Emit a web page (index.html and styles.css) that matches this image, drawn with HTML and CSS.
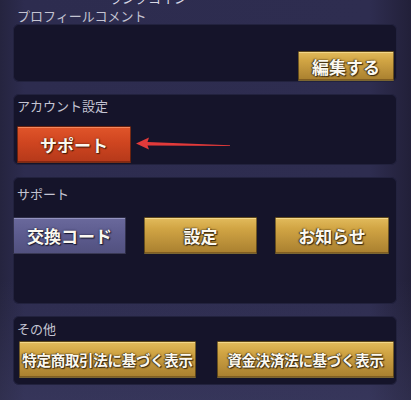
FILE: index.html
```html
<!DOCTYPE html>
<html lang="ja">
<head>
<meta charset="utf-8">
<link rel="stylesheet" href="styles.css">
</head>
<body>
<div class="page">
  <div class="clip-top"><span class="clip-text">ランクコイン</span></div>
  <div class="label outer">プロフィールコメント</div>
  <div class="panel panel-comment">
    <button class="btn gold btn-edit">編集する</button>
  </div>

  <div class="panel panel-account">
    <div class="label">アカウント設定</div>
    <div class="row row-account">
      <button class="btn red btn-support">サポート</button>
    </div>
    <svg class="arrow" width="100" height="16" viewBox="0 0 100 16">
      <path d="M2 7.5 L15 1.5 L13.5 6 L96 9.2 L96 10 L13.5 9.6 L15 13.5 Z" fill="#e23a3a"/>
    </svg>
  </div>

  <div class="panel panel-support">
    <div class="label">サポート</div>
    <div class="row row-three">
      <button class="btn purple btn-third">交換コード</button>
      <button class="btn gold btn-third">設定</button>
      <button class="btn gold btn-third">お知らせ</button>
    </div>
  </div>

  <div class="panel panel-other">
    <div class="label">その他</div>
    <div class="row row-two">
      <button class="btn gold btn-half">特定商取引法に基づく表示</button>
      <button class="btn gold btn-half">資金決済法に基づく表示</button>
    </div>
  </div>
</div>
</body>
</html>
```

FILE: styles.css
```css
html, body {
  margin: 0;
  padding: 0;
}
body {
  width: 411px;
  height: 400px;
  overflow: hidden;
  background: linear-gradient(90deg, #25243f 0%, #2d2c4f 6%, #2e2d50 90%, #222039 100%);
  font-family: "Noto Sans CJK JP", "Noto Sans", sans-serif;
}
.page {
  width: 411px;
  height: 400px;
  box-sizing: border-box;
  padding: 0 14px 0 13px;
  background: linear-gradient(180deg, rgba(40,40,70,0) 0%, rgba(40,40,70,0) 70%, rgba(70,70,110,0.35) 100%);
}
.clip-top {
  height: 5px;
  overflow: hidden;
  padding-left: 96px;
}
.clip-text {
  display: block;
  margin-top: -10px;
  font-size: 13px;
  line-height: 15px;
  color: #d8d8e4;
}
.label {
  font-size: 13px;
  line-height: 15px;
  color: #c4c4d2;
  padding-left: 4px;
}
.label.outer {
  margin-top: 3px;
}
.panel {
  position: relative;
  box-sizing: border-box;
  background: #15142a;
  border-radius: 6px;
  box-shadow: inset 0 0 0 1px rgba(60,60,100,0.35);
}
.panel-comment {
  margin-top: 1px;
  height: 58px;
  display: flex;
  justify-content: flex-end;
  align-items: flex-end;
  padding: 0 3px 1px 0;
}
.panel-account {
  margin-top: 12px;
  height: 71px;
  padding-top: 4px;
}
.panel-support {
  margin-top: 12px;
  height: 127px;
  padding-top: 9px;
}
.panel-other {
  margin-top: 12px;
  height: 69px;
  padding-top: 5px;
}
.row {
  display: flex;
}
.row-account {
  margin-top: 13px;
  padding-left: 4px;
}
.row-three {
  margin-top: 16px;
  gap: 18px;
}
.row-two {
  margin-top: 5px;
  padding-left: 6px;
  gap: 21px;
}
.btn {
  box-sizing: border-box;
  border: 1px solid rgba(0,0,0,0.45);
  border-radius: 1px;
  padding: 0;
  font-family: "Noto Sans CJK JP", "Noto Sans", sans-serif;
  font-weight: 700;
  color: #fbf8f0;
  text-shadow: 0 0 2px #3a2a10, 1px 1px 1px #3a2a10, -1px 0 1px rgba(40,30,10,0.7);
  display: flex;
  align-items: center;
  justify-content: center;
  white-space: nowrap;
}
.gold {
  background: linear-gradient(180deg, #e2bb5c 0%, #d1a544 30%, #bd923a 65%, #a9802f 100%);
  box-shadow: inset 0 1px 0 rgba(255,235,170,0.6), inset 0 -1px 0 rgba(90,60,20,0.5);
}
.red {
  background: linear-gradient(180deg, #e0552a 0%, #cf4520 45%, #b5391a 100%);
  box-shadow: inset 0 1px 0 rgba(255,170,130,0.6), inset 0 -1px 0 rgba(90,20,10,0.5);
  text-shadow: 0 0 2px #4a1a08, 1px 1px 1px #4a1a08;
}
.purple {
  background: linear-gradient(180deg, #6a699c 0%, #5c5b8e 50%, #52517f 100%);
  box-shadow: inset 0 1px 0 rgba(190,190,230,0.5);
  text-shadow: 0 0 2px #1a1a30, 1px 1px 1px #1a1a30;
}
.btn-edit {
  width: 96px;
  height: 30px;
  font-size: 17px;
}
.btn-support {
  width: 114px;
  height: 37px;
  font-size: 17px;
}
.btn-third {
  width: 113px;
  height: 37px;
  font-size: 17px;
}
.btn-third:last-child {
  width: 114px;
}
.btn-half {
  width: 177px;
  height: 37px;
  font-size: 14.5px;
  letter-spacing: -0.3px;
}
.arrow {
  position: absolute;
  left: 121px;
  top: 42px;
}
```
